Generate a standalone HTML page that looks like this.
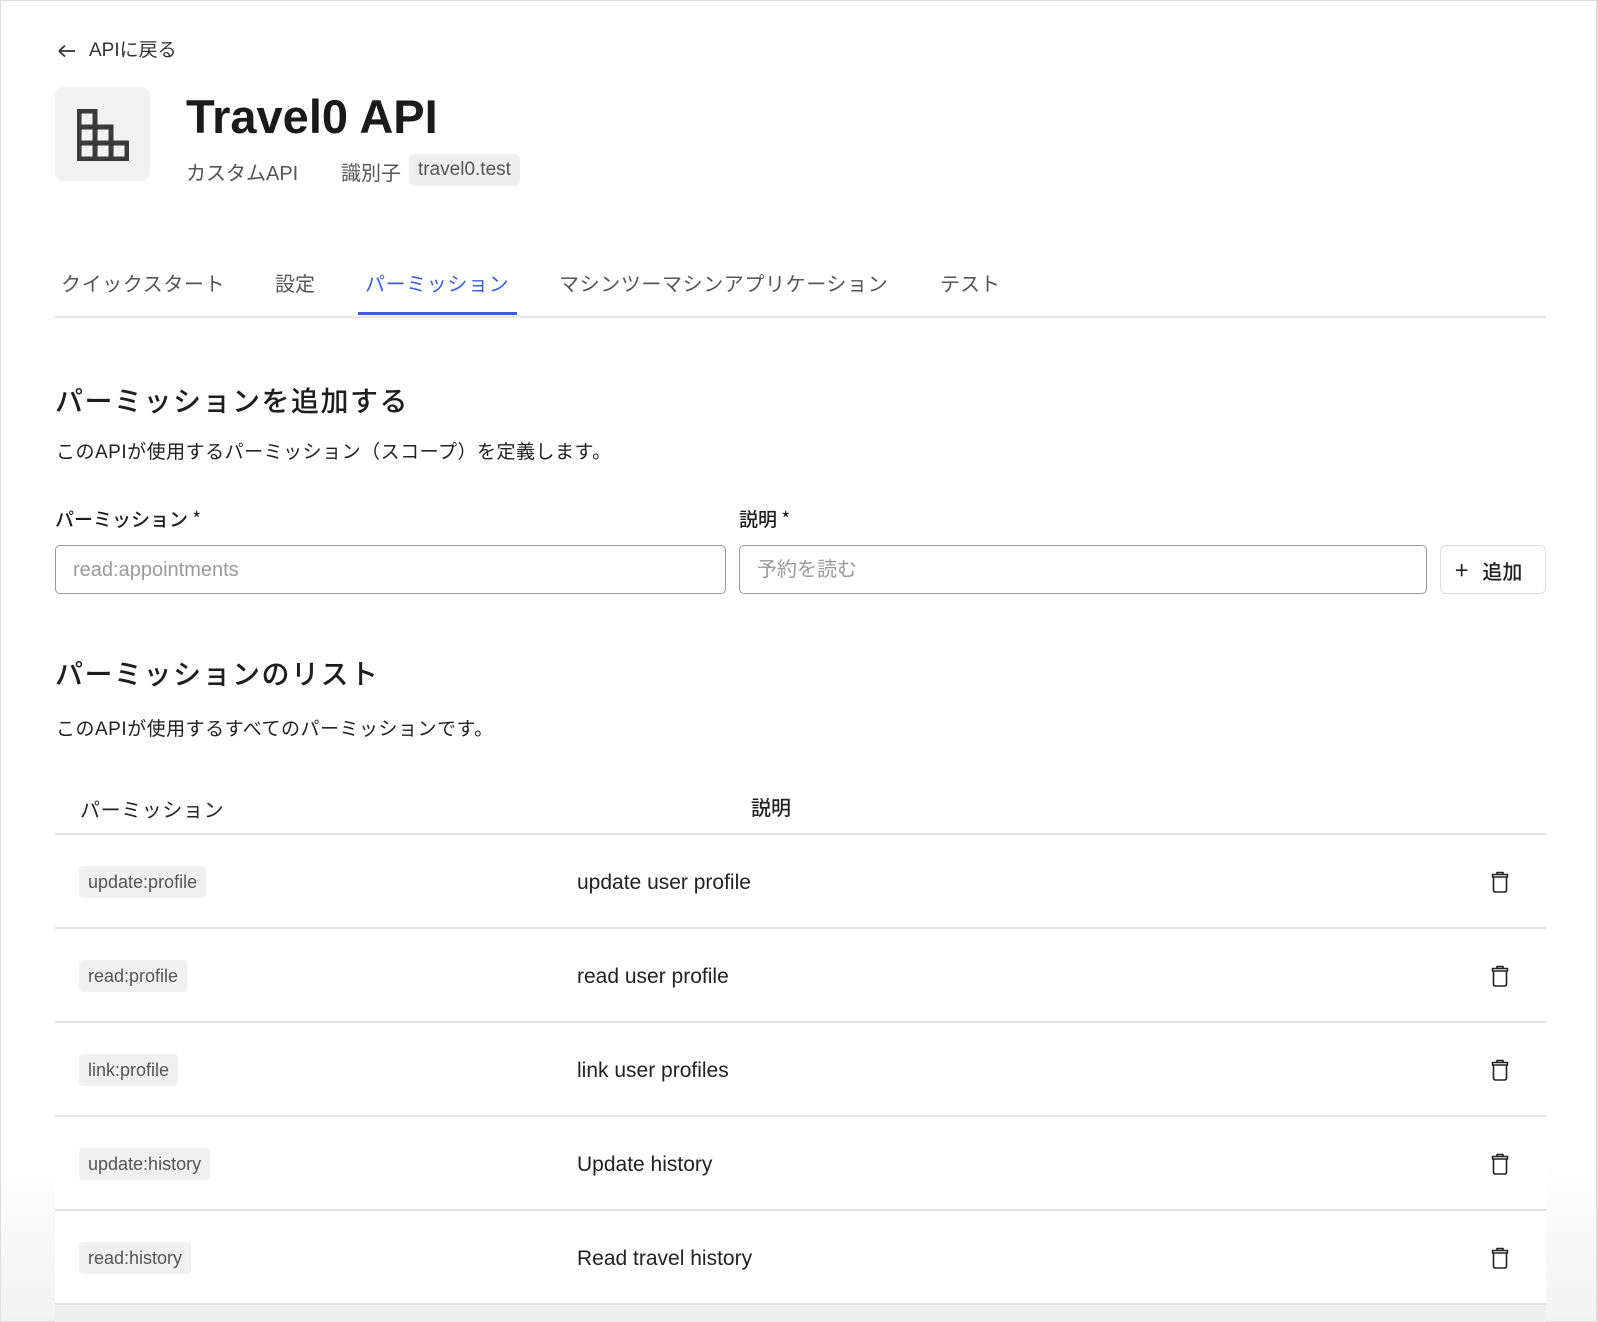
<!DOCTYPE html>
<html><head><meta charset="utf-8"><style>
*{box-sizing:border-box;margin:0;padding:0}
body{width:1598px;height:1322px;position:relative;overflow:hidden;background:#fff;font-family:"Liberation Sans","Noto Sans CJK JP",sans-serif;color:#1e1e1e}
.frame{position:absolute;left:0;top:0;width:1598px;height:1322px;border:1px solid #ddd;border-right:2px solid #ddd}
.abs{position:absolute;white-space:nowrap}
.shade{position:absolute;left:0;right:0;top:1162px;bottom:0;background:linear-gradient(#fff,#f2f2f2)}
.tag{position:absolute;background:#f0f0f0;border-radius:4px;color:#555;font-size:18px;height:32px;line-height:32px;padding:0 9px}
.row{position:absolute;left:55px;width:1491px;height:94px;background:#fff;border-bottom:2px solid #e3e3e3}
.desc{position:absolute;left:522px;font-size:21px;color:#222;line-height:96px;top:0}
.trash{position:absolute;left:1435px;top:35px}
.h{font-weight:500;font-family:"Noto Sans CJK JP","Liberation Sans",sans-serif}
</style></head><body>
<div class="shade"></div>
<div class="frame"></div>

<div class="abs" style="left:57px;top:35px;font-size:19px;color:#333">
<svg width="20" height="14" viewBox="0 0 20 14" style="vertical-align:middle;margin-right:12px"><path d="M2 7H18M2 7L8 1.5M2 7L8 12.5" stroke="#333" stroke-width="1.8" fill="none"/></svg>APIに戻る</div>

<div class="abs" style="left:55px;top:87px;width:95px;height:94px;background:#f1f1f1;border-radius:9px">
<svg width="52" height="52" viewBox="0 0 52 52" style="position:absolute;left:22px;top:22px"><path d="M2 2H18V18H34V34H50V50H2Z M2 18H18 M2 34H34 M18 18V50 M34 34V50" stroke="#3a3a3a" stroke-width="5" fill="none"/></svg></div>

<div class="abs" style="left:186px;top:89px;font-size:47px;font-weight:700;color:#1a1a1a">Travel0 API</div>
<div class="abs" style="left:186px;top:157px;font-size:20px;color:#555">カスタムAPI</div>
<div class="abs" style="left:341px;top:157px;font-size:20px;color:#555">識別子</div>
<div class="abs" style="left:409px;top:154px;height:32px;line-height:32px;padding:0 9px;background:#efefef;border-radius:5px;font-size:19px;color:#555">travel0.test</div>

<div class="abs" style="left:61px;top:268px;font-size:20px;color:#555;letter-spacing:0.6px">クイックスタート</div>
<div class="abs" style="left:275px;top:268px;font-size:20px;color:#555">設定</div>
<div class="abs" style="left:365px;top:268px;font-size:20px;color:#3b5fe0;letter-spacing:0.6px">パーミッション</div>
<div class="abs" style="left:559px;top:268px;font-size:20px;color:#555;letter-spacing:0.6px">マシンツーマシンアプリケーション</div>
<div class="abs" style="left:940px;top:268px;font-size:20px;color:#555">テスト</div>
<div class="abs" style="left:55px;top:316px;width:1491px;height:2px;background:#e6e6e6"></div>
<div class="abs" style="left:358px;top:312px;width:159px;height:3px;background:#3b5fe0"></div>

<div class="abs h" style="left:55px;top:380px;font-size:28px;color:#1e1e1e;letter-spacing:1.5px">パーミッションを追加する</div>
<div class="abs" style="left:56px;top:437px;font-size:19px;color:#222;letter-spacing:0.5px">このAPIが使用するパーミッション（スコープ）を定義します。</div>

<div class="abs h" style="left:55px;top:505px;font-size:19px">パーミッション <span style="font-weight:400">*</span></div>
<div class="abs h" style="left:739px;top:505px;font-size:19px">説明 <span style="font-weight:400">*</span></div>
<div class="abs" style="left:55px;top:545px;width:671px;height:49px;border:1.5px solid #999;border-radius:5px;font-size:20px;color:#9a9a9a;line-height:48px;padding-left:17px">read:appointments</div>
<div class="abs" style="left:739px;top:545px;width:688px;height:49px;border:1.5px solid #999;border-radius:5px;font-size:20px;color:#9a9a9a;line-height:48px;padding-left:17px">予約を読む</div>
<div class="abs h" style="left:1440px;top:545px;width:106px;height:49px;border:1.5px solid #ddd;border-radius:6px;font-size:20px;line-height:46px;padding-left:14px;color:#222"><span style="font-size:24px;font-weight:400;margin-right:14px">+</span>追加</div>

<div class="abs h" style="left:55px;top:653px;font-size:28px;letter-spacing:1.5px">パーミッションのリスト</div>
<div class="abs" style="left:56px;top:714px;font-size:19px;color:#222;letter-spacing:0.5px">このAPIが使用するすべてのパーミッションです。</div>

<div class="abs" style="left:80px;top:794px;font-size:20px;color:#222;letter-spacing:0.6px">パーミッション</div>
<div class="abs h" style="left:751px;top:792px;font-size:20px;color:#222">説明</div>
<div class="abs" style="left:55px;top:833px;width:1491px;height:2px;background:#e3e3e3"></div>

<div class="row" style="top:835px"><div class="tag" style="left:24px;top:31px">update:profile</div><div class="desc">update user profile</div><svg class="trash" width="20" height="24" viewBox="0 0 20 24"><path d="M3.5 7H16.5V20Q16.5 22 14.5 22H5.5Q3.5 22 3.5 20Z M2.5 4.5H17.5V7H2.5Z M7 4.5V2.5H13V4.5" stroke="#222" stroke-width="1.6" fill="none" stroke-linejoin="round"/></svg></div>
<div class="row" style="top:929px"><div class="tag" style="left:24px;top:31px">read:profile</div><div class="desc">read user profile</div><svg class="trash" width="20" height="24" viewBox="0 0 20 24"><path d="M3.5 7H16.5V20Q16.5 22 14.5 22H5.5Q3.5 22 3.5 20Z M2.5 4.5H17.5V7H2.5Z M7 4.5V2.5H13V4.5" stroke="#222" stroke-width="1.6" fill="none" stroke-linejoin="round"/></svg></div>
<div class="row" style="top:1023px"><div class="tag" style="left:24px;top:31px">link:profile</div><div class="desc">link user profiles</div><svg class="trash" width="20" height="24" viewBox="0 0 20 24"><path d="M3.5 7H16.5V20Q16.5 22 14.5 22H5.5Q3.5 22 3.5 20Z M2.5 4.5H17.5V7H2.5Z M7 4.5V2.5H13V4.5" stroke="#222" stroke-width="1.6" fill="none" stroke-linejoin="round"/></svg></div>
<div class="row" style="top:1117px"><div class="tag" style="left:24px;top:31px">update:history</div><div class="desc">Update history</div><svg class="trash" width="20" height="24" viewBox="0 0 20 24"><path d="M3.5 7H16.5V20Q16.5 22 14.5 22H5.5Q3.5 22 3.5 20Z M2.5 4.5H17.5V7H2.5Z M7 4.5V2.5H13V4.5" stroke="#222" stroke-width="1.6" fill="none" stroke-linejoin="round"/></svg></div>
<div class="row" style="top:1211px"><div class="tag" style="left:24px;top:31px">read:history</div><div class="desc">Read travel history</div><svg class="trash" width="20" height="24" viewBox="0 0 20 24"><path d="M3.5 7H16.5V20Q16.5 22 14.5 22H5.5Q3.5 22 3.5 20Z M2.5 4.5H17.5V7H2.5Z M7 4.5V2.5H13V4.5" stroke="#222" stroke-width="1.6" fill="none" stroke-linejoin="round"/></svg></div>
<div class="abs" style="left:55px;top:1306px;width:1491px;height:16px;background:#efefef"></div>
</body></html>
